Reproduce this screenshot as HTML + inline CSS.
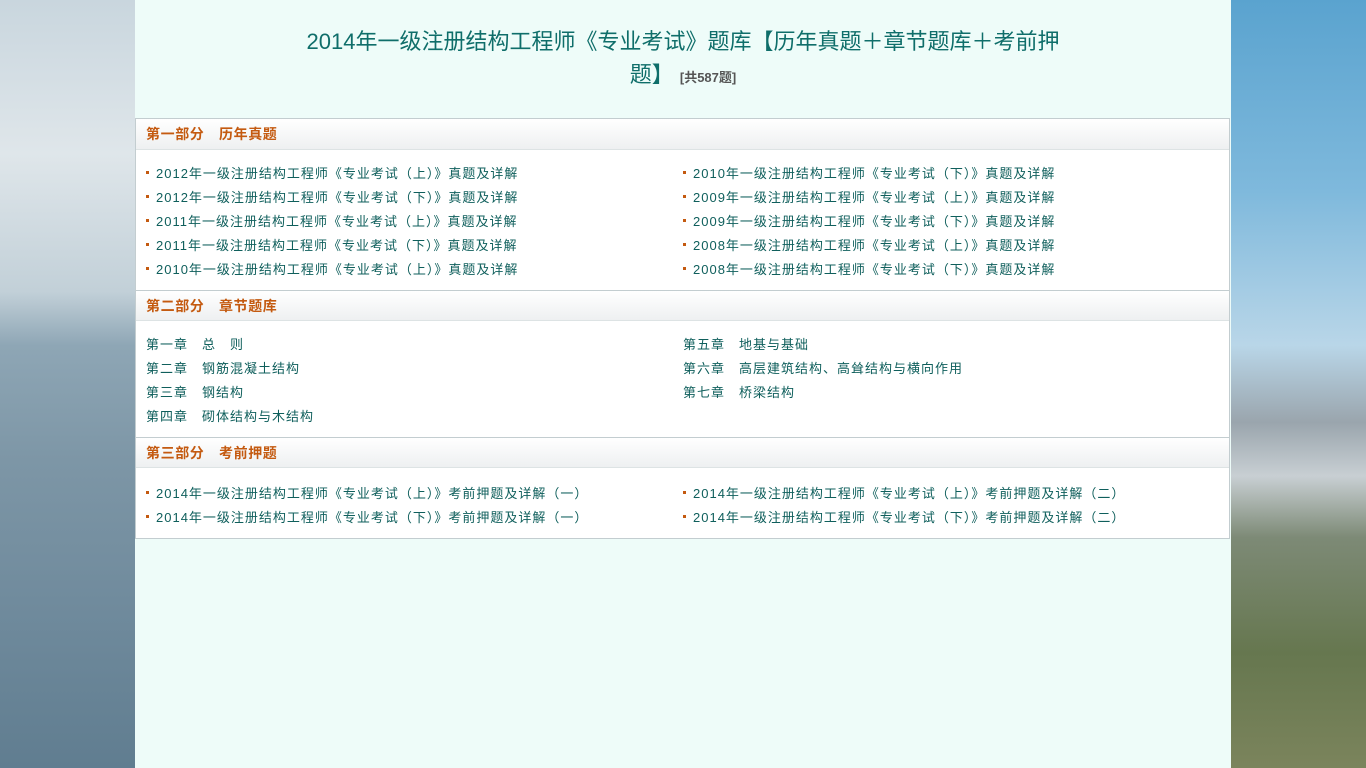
<!DOCTYPE html>
<html><head><meta charset="utf-8"><style>
*{margin:0;padding:0;box-sizing:border-box}
body{width:1366px;height:768px;overflow:hidden;position:relative;font-family:"Liberation Sans","Noto Sans CJK SC",sans-serif;background:#eefcf9}
.left{position:absolute;left:0;top:0;width:135px;height:768px;background:linear-gradient(180deg,#c9d6de 0%,#dfe6ea 20%,#c2d0d8 38%,#8ea6b5 45%,#7d96a6 60%,#6f8a9c 80%,#607d90 100%)}
.right{position:absolute;left:1231px;top:0;width:135px;height:768px;background:linear-gradient(180deg,#5aa3cf 0%,#7fb9dc 25%,#b9d6e8 45%,#9aa5ad 55%,#c8cfd3 62%,#7d8a76 70%,#66774f 85%,#7b845c 100%)}
.main{position:absolute;left:135px;top:0;width:1096px;height:768px;background:#eefcf9}
h1{position:absolute;left:0;width:1096px;top:25px;text-align:center;font-weight:normal;font-size:22px;line-height:33px;color:#0f6e6a;padding:0 160px}
h1 small{font-size:13px;color:#555;font-weight:bold}
.box{position:absolute;left:0;top:118px;width:1095px;border:1px solid #c3cdd0;background:#fff}
.hd{height:31px;line-height:31px;padding-left:10px;font-size:14px;font-weight:bold;letter-spacing:0.6px;color:#c45a10;background:linear-gradient(180deg,#fff,#eef0f1);border-bottom:1px solid #dde3e4;border-top:1px solid #c3cdd0}
.hd:first-child{border-top:none}
.bd{padding:12px 0 8px 10px;display:flex;flex-wrap:wrap}
.bd.last{padding-top:14px}
.bd div{width:537px;height:24px;line-height:24px;font-size:13px;color:#0f5f5c;letter-spacing:1px;white-space:nowrap}
.bd.li div::before{content:"";display:inline-block;width:3px;height:3px;background:#c45a10;margin-right:7px;vertical-align:middle;position:relative;top:-2px}
</style></head><body>
<div class="left"></div><div class="right"></div>
<div class="main">
<h1>2014年一级注册结构工程师《专业考试》题库【历年真题＋章节题库＋考前押题】 <small>[共587题]</small></h1>
<div class="box">
<div class="hd">第一部分　历年真题</div>
<div class="bd li">
<div>2012年一级注册结构工程师《专业考试（上）》真题及详解</div><div>2010年一级注册结构工程师《专业考试（下）》真题及详解</div>
<div>2012年一级注册结构工程师《专业考试（下）》真题及详解</div><div>2009年一级注册结构工程师《专业考试（上）》真题及详解</div>
<div>2011年一级注册结构工程师《专业考试（上）》真题及详解</div><div>2009年一级注册结构工程师《专业考试（下）》真题及详解</div>
<div>2011年一级注册结构工程师《专业考试（下）》真题及详解</div><div>2008年一级注册结构工程师《专业考试（上）》真题及详解</div>
<div>2010年一级注册结构工程师《专业考试（上）》真题及详解</div><div>2008年一级注册结构工程师《专业考试（下）》真题及详解</div>
</div>
<div class="hd">第二部分　章节题库</div>
<div class="bd">
<div>第一章　总　则</div><div>第五章　地基与基础</div>
<div>第二章　钢筋混凝土结构</div><div>第六章　高层建筑结构、高耸结构与横向作用</div>
<div>第三章　钢结构</div><div>第七章　桥梁结构</div>
<div>第四章　砌体结构与木结构</div>
</div>
<div class="hd">第三部分　考前押题</div>
<div class="bd li last">
<div>2014年一级注册结构工程师《专业考试（上）》考前押题及详解（一）</div><div>2014年一级注册结构工程师《专业考试（上）》考前押题及详解（二）</div>
<div>2014年一级注册结构工程师《专业考试（下）》考前押题及详解（一）</div><div>2014年一级注册结构工程师《专业考试（下）》考前押题及详解（二）</div>
</div>
</div>
</div>
</body></html>
